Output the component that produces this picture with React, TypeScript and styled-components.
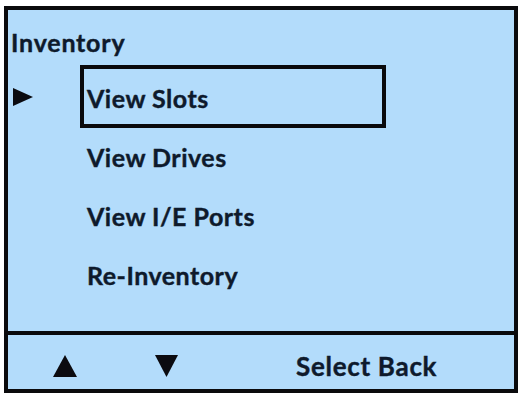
import React from "react";
import styled, { createGlobalStyle } from "styled-components";

const Global = createGlobalStyle`
  html, body { margin: 0; padding: 0; background: #ffffff; }
  body { font-family: "Lato", "Open Sans", sans-serif; }
  * { box-sizing: border-box; }
`;

const Page = styled.div`
  width: 520px;
  height: 395px;
  padding: 6px 0 0 4px;
`;

const Screen = styled.div`
  width: 514px;
  height: 387px;
  border: 4px solid #0a0a0c;
  background: #b3dcfb;
  display: flex;
  flex-direction: column;
  color: #0e1a2c;
  -webkit-text-stroke: 0.4px #0e1a2c;
`;

const Main = styled.div`
  height: 321px;
  display: flex;
  flex-direction: column;
  padding-top: 20px;
`;

const Title = styled.div`
  font-size: 25px;
  line-height: 25px;
  font-weight: 700;
  letter-spacing: 0.8px;
  padding-left: 3px;
  margin-bottom: 10px;
`;

const Menu = styled.div`
  display: flex;
  flex-direction: column;
`;

const Row = styled.div`
  display: flex;
  align-items: center;
  margin-bottom: -4px;
`;

const Pointer = styled.div`
  width: 72px;
  padding-left: 5px;
  display: flex;
  align-items: center;
`;

const Item = styled.div<{ $selected?: boolean }>`
  width: 306px;
  height: 63px;
  border: 4px solid ${(p) => (p.$selected ? "#0a0a0c" : "transparent")};
  padding: 17px 0 13px 3px;
  font-size: 25px;
  line-height: 25px;
  font-weight: 700;
  letter-spacing: 0.5px;
`;

const Footer = styled.div`
  flex: 1;
  border-top: 4px solid #0a0a0c;
  display: flex;
  align-items: center;
  padding: 7px 0 0 45px;
`;

const Key = styled.div<{ $gap: number }>`
  margin-right: ${(p) => p.$gap}px;
  display: flex;
`;

const Label = styled.div`
  font-size: 26px;
  line-height: 26px;
  font-weight: 700;
  letter-spacing: 0.7px;
`;

const RightArrow = () => (
  <svg width="20" height="18" viewBox="0 0 20 18">
    <polygon points="0,0 20,9 0,18" fill="#0b0b10" />
  </svg>
);

const UpArrow = () => (
  <svg width="24" height="22" viewBox="0 0 24 22">
    <polygon points="12,0 24,22 0,22" fill="#0b0b10" />
  </svg>
);

const DownArrow = () => (
  <svg width="23" height="22" viewBox="0 0 23 22">
    <polygon points="0,0 23,0 11.5,22" fill="#0b0b10" />
  </svg>
);

const items = ["View Slots", "View Drives", "View I/E Ports", "Re-Inventory"];

export default function App() {
  return (
    <>
      <Global />
      <Page>
        <Screen>
          <Main>
            <Title>Inventory</Title>
            <Menu>
              {items.map((label, i) => (
                <Row key={label}>
                  <Pointer>{i === 0 && <RightArrow />}</Pointer>
                  <Item $selected={i === 0}>{label}</Item>
                </Row>
              ))}
            </Menu>
          </Main>
          <Footer>
            <Key $gap={78}>
              <UpArrow />
            </Key>
            <Key $gap={118}>
              <DownArrow />
            </Key>
            <Label>Select Back</Label>
          </Footer>
        </Screen>
      </Page>
    </>
  );
}
